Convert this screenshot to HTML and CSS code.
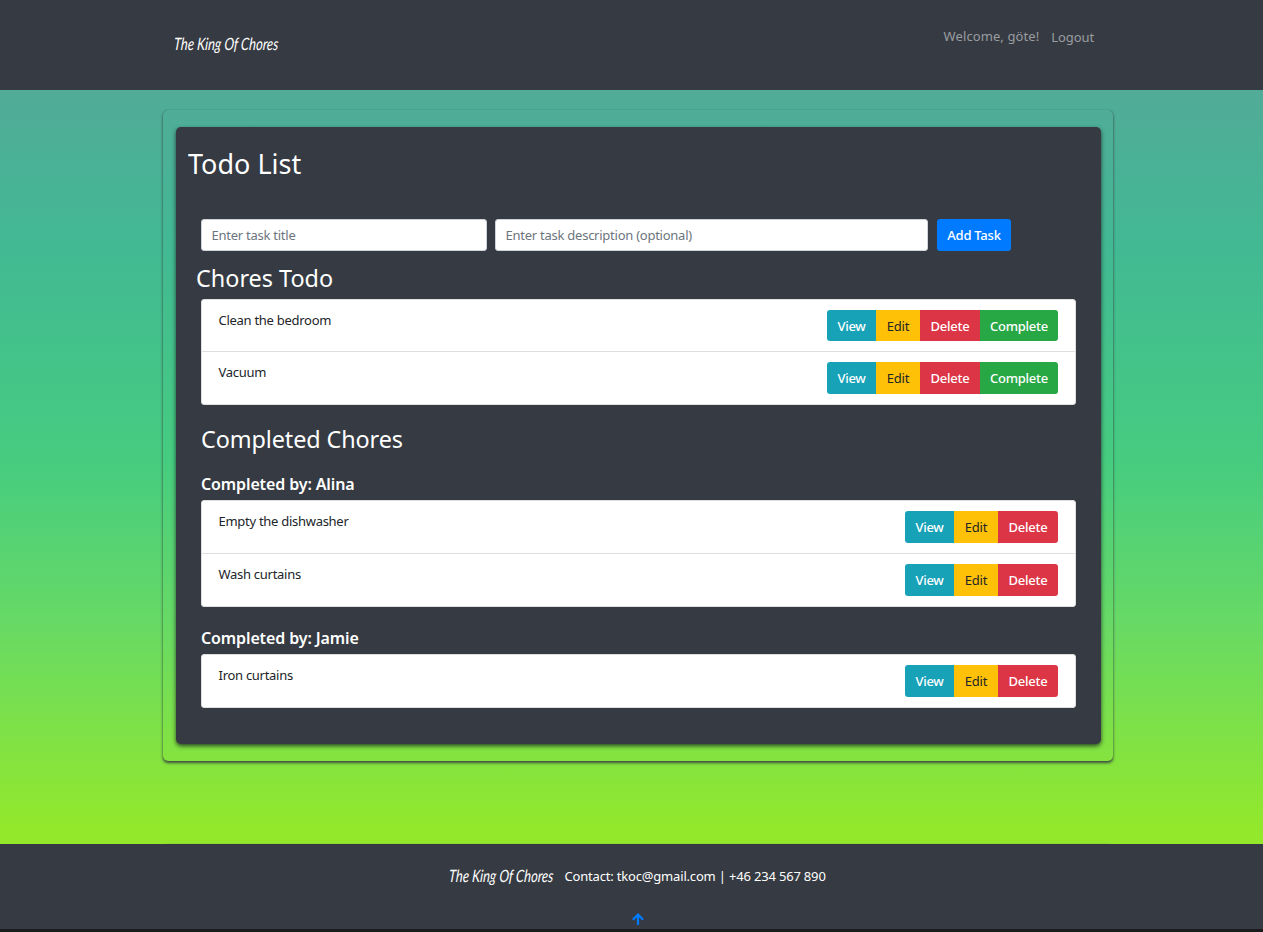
FILE: index.html
```html
<!DOCTYPE html>
<html lang="en">
<head>
<meta charset="utf-8">
<title>The King Of Chores</title>
<link rel="stylesheet" href="styles.css">
</head>
<body>
<header class="navbar">
  <a class="brand"><span class="script">The King Of Chores</span></a>
  <nav class="nav"><span class="welcome">Welcome, göte!</span><a class="logout">Logout</a></nav>
</header>
<main class="main">
  <div class="frame">
    <section class="card">
      <h1 class="title"><span>Todo List</span></h1>
      <form class="task-form">
        <input class="input input-title" placeholder="Enter task title">
        <input class="input input-desc" placeholder="Enter task description (optional)">
        <button class="btn add" type="button">Add Task</button>
      </form>
      <h2 class="subtitle todo"><span>Chores Todo</span></h2>
      <ul class="list open-list">
        <li class="item"><span>Clean the bedroom</span><div class="group"><a class="btn view">View</a><a class="btn edit">Edit</a><a class="btn delete">Delete</a><a class="btn complete">Complete</a></div></li>
        <li class="item"><span>Vacuum</span><div class="group"><a class="btn view">View</a><a class="btn edit">Edit</a><a class="btn delete">Delete</a><a class="btn complete">Complete</a></div></li>
      </ul>
      <h2 class="subtitle done"><span>Completed Chores</span></h2>
      <h3 class="by"><span>Completed by: Alina</span></h3>
      <ul class="list">
        <li class="item"><span>Empty the dishwasher</span><div class="group"><a class="btn view">View</a><a class="btn edit">Edit</a><a class="btn delete">Delete</a></div></li>
        <li class="item"><span>Wash curtains</span><div class="group"><a class="btn view">View</a><a class="btn edit">Edit</a><a class="btn delete">Delete</a></div></li>
      </ul>
      <h3 class="by second"><span>Completed by: Jamie</span></h3>
      <ul class="list">
        <li class="item"><span>Iron curtains</span><div class="group"><a class="btn view">View</a><a class="btn edit">Edit</a><a class="btn delete">Delete</a></div></li>
      </ul>
    </section>
  </div>
  <div class="edge"></div>
</main>
<footer class="footer">
  <div class="contact"><span class="brand"><span class="script">The King Of Chores</span></span><span class="contact-text">Contact: tkoc@gmail.com | +46 234 567 890</span></div>
  <a class="top"><svg width="12" height="12" viewBox="0 0 12 12" fill="none" stroke="#007bff" stroke-width="2.2"><path d="M6 12V1.5M.8 6.8 6 1.6l5.2 5.2"/></svg></a>
</footer>
</body>
</html>
```
FILE: styles.css
```css
* { box-sizing: border-box; }
body {
  margin: 0;
  height: 932px;
  overflow: hidden;
  display: flex;
  flex-direction: column;
  background: #343a40;
  color: #fff;
  font: 13px/20px "Noto Sans", "Open Sans", sans-serif;
}
.navbar {
  height: 90px;
  flex: none;
  display: flex;
  justify-content: space-between;
  align-items: flex-start;
  padding: 26px 169px 0 174px;
  background: #363a42;
}
.brand { display: block; width: 105px; height: 30px; }
.script {
  display: inline-block;
  font: italic 400 17px/30px Lato, sans-serif;
  white-space: nowrap;
  transform: scaleX(.765) skewX(-6deg);
  transform-origin: 0 50%;
}
.navbar .brand { margin-top: 3px; }
.nav { display: flex; gap: 12px; color: #9a9da0; }
.welcome { letter-spacing: .1px; }
.logout { margin-top: 1px; letter-spacing: -.1px; }
.main {
  height: 754px;
  flex: none;
  display: flex;
  flex-direction: column;
  justify-content: space-between;
  padding: 20px 150px 0 163px;
  overflow: hidden;
  background: linear-gradient(#51ab98 0%, #42b993 21%, #46cc80 49%, #66d966 70%, #93e82b 98%);
}
.frame {
  height: 651px;
  padding: 17px 12px 16px 13px;
  border-radius: 5px;
  box-shadow: 0 0 1px rgba(52, 58, 64, .6), 0 2px 3px rgba(52, 58, 64, .9);
}
.edge {
  height: 10px;
  margin-bottom: -10px;
  border-radius: 5px;
  box-shadow: 0 0 1px rgba(52, 58, 64, .8);
}
.card {
  height: 617px;
  padding: 18px 25px 0;
  border-radius: 5px;
  background: #363a42;
  box-shadow: 0 2px 4px rgba(20, 30, 30, .8);
}
h1, h2, h3 { margin: 0; font-weight: 400; }
.title { margin-left: -13px; font-size: 27px; line-height: 37px; }
.task-form { display: flex; margin-top: 37px; }
.input {
  height: 32px;
  padding: 0 10px 0 9.5px;
  border: 1px solid #ced4da;
  border-radius: 3px;
  background: #fff;
  font: inherit;
  letter-spacing: -.25px;
}
.input::placeholder { color: #6c757d; }
.input-title { width: 286px; margin-right: 8px; }
.input-desc { width: 433px; margin-right: 9px; }
.btn {
  height: 32px;
  padding: 6px 0;
  border: 0;
  font: 500 13px/20px "Noto Sans", sans-serif;
  letter-spacing: -.25px;
  color: #fff;
  text-align: center;
}
.add { width: 74px; border-radius: 3px; background: #007bff; }
.subtitle { font-size: 23.4px; line-height: 30px; }
.todo { margin: 12px 0 6px -5px; }
.done { margin-top: 19px; letter-spacing: -.1px; }
.by { margin: 20px 0 5px; font-size: 16px; line-height: 21px; font-weight: 600; letter-spacing: -.12px; }
.by.second { margin-top: 21px; }
.list {
  margin: 0;
  padding: 0;
  list-style: none;
  border: 1px solid #dfdfdf;
  border-radius: 3px;
  background: #fff;
  color: #212529;
  letter-spacing: -.28px;
}
.item {
  display: flex;
  justify-content: space-between;
  height: 52px;
  padding: 10px 17px 0 16.5px;
}
.item + .item { height: 53px; border-top: 1px solid #dfdfdf; }
.open-list .item:first-child { height: 51px; }
.open-list .item:first-child .btn { height: 31px; }
.group { display: flex; }
.group .btn:first-child { border-radius: 3px 0 0 3px; }
.group .btn:last-child { border-radius: 0 3px 3px 0; }
.view { width: 49px; background: #17a2b8; }
.edit { width: 44px; background: #ffc107; color: #212529; font-weight: 400; }
.delete { width: 60px; background: #dc3545; }
.complete { width: 78px; background: #28a745; }
.footer {
  flex: 1;
  padding-top: 17px;
  border-bottom: 3px solid #1b1b1d;
  background: #363a42;
}
.contact { display: flex; padding-left: 449px; }
.contact .brand { margin-right: 10.5px; }
.contact-text { line-height: 31px; letter-spacing: -.18px; }
.top { display: flex; justify-content: center; padding: 21px 0 0 12px; }
```
